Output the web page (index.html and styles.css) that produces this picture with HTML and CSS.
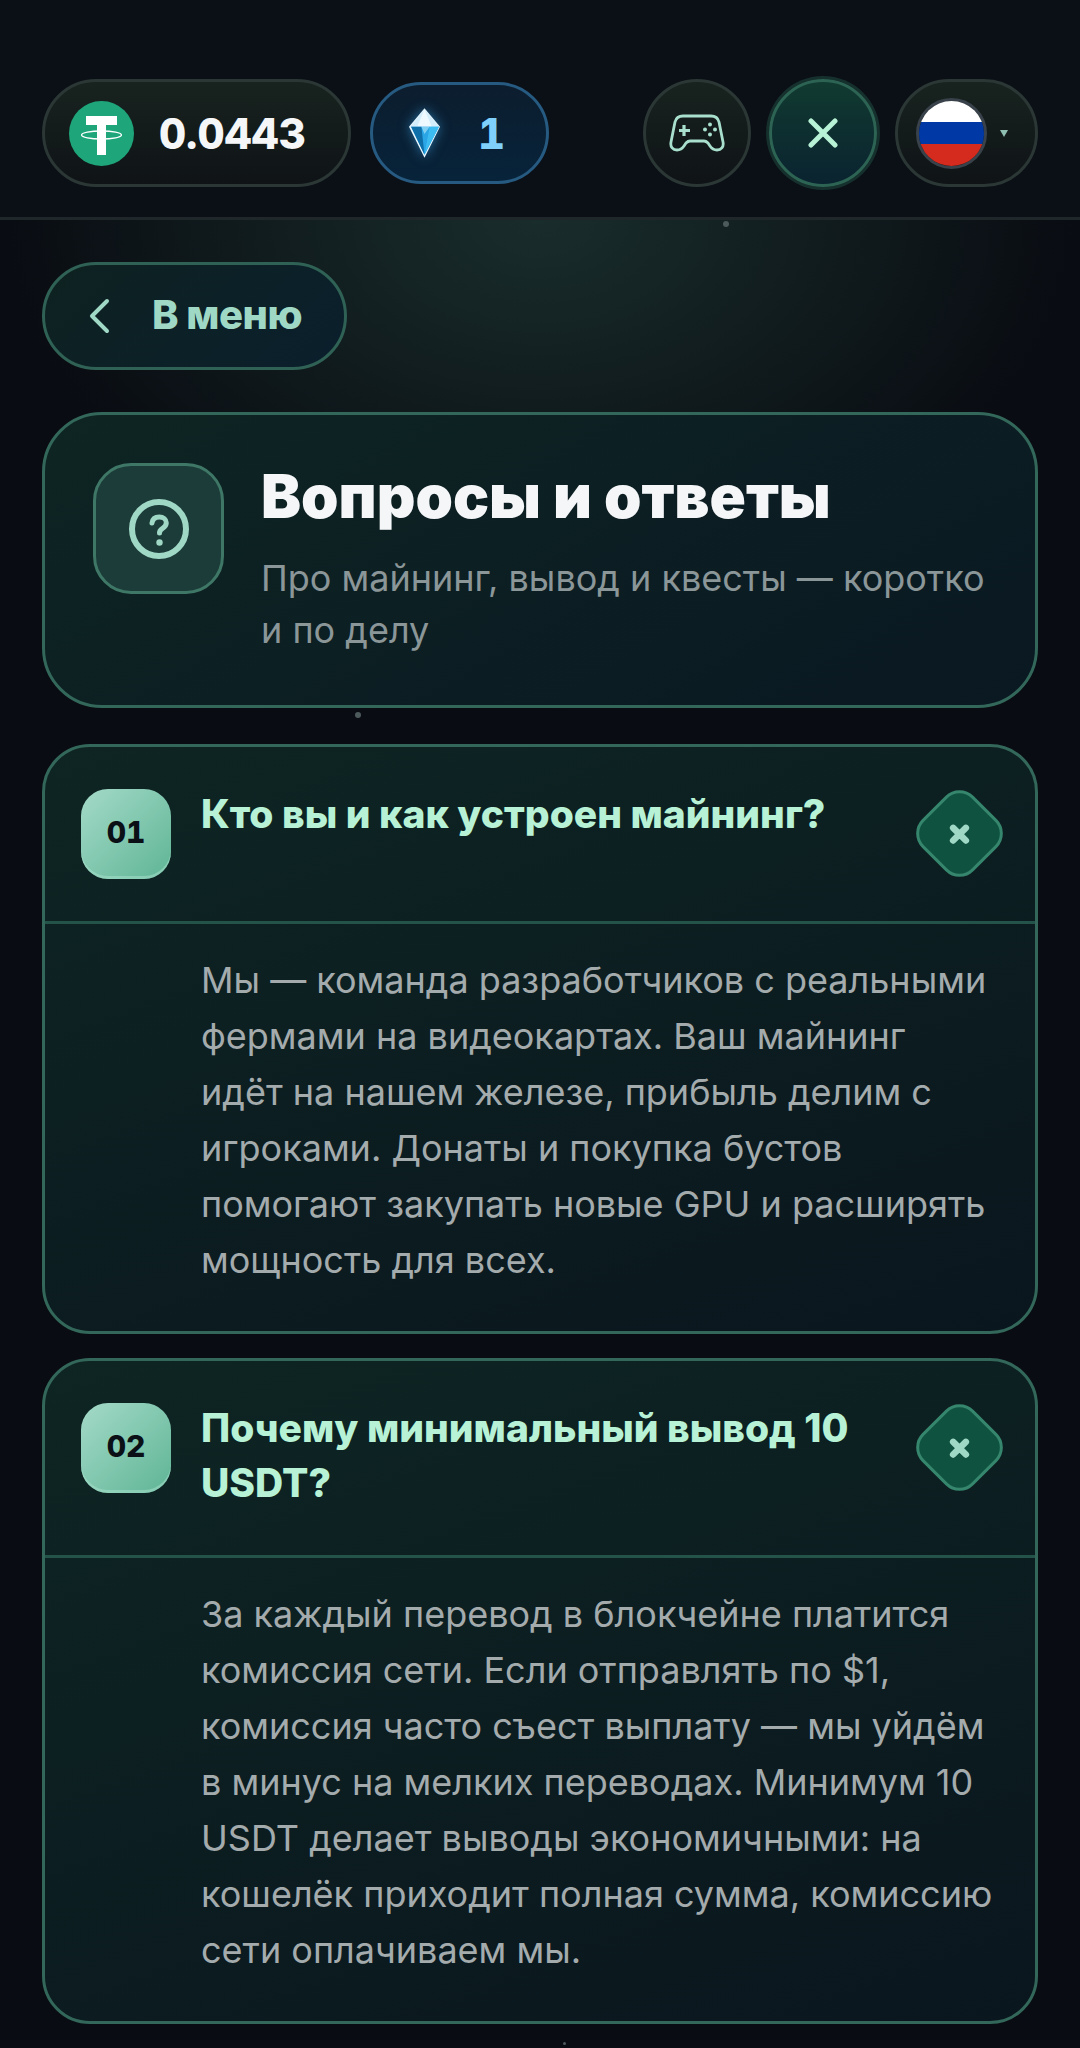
FILE: index.html
```html
<!DOCTYPE html>
<html lang="ru">
<head>
<meta charset="utf-8"/>
<title>Вопросы и ответы</title>
<link rel="stylesheet" href="styles.css">
</head>
<body>
<div class="page">
  <span class="dust dust-a"></span>
  <span class="dust dust-b"></span>
  <span class="dust dust-c"></span>

  <header class="topbar">
    <div class="pill balance">
      <svg class="usdt" viewBox="0 0 65 65">
        <circle cx="32.500" cy="32.500" r="32.500" fill="#1ea67a"/>
        <path d="M17 15h31v9H37v6h-9v-6H17z" fill="#fff"/>
        <path d="M28 38h9v16h-9z" fill="#fff"/>
        <ellipse cx="32.500" cy="34" rx="20" ry="4" fill="none" stroke="#fff" stroke-width="1.300"/>
        <path d="M28 30h9v9h-9z" fill="#fff"/>
      </svg>
      <span class="balance-value">0.0443</span>
    </div>
    <div class="pill gems">
      <svg class="gem" viewBox="0 0 30 48">
        <path d="M15 0 30 18 15 48 0 18z" fill="#e8f6fd"/>
        <path d="M15 1 29 18H1z" fill="#d3edfb"/>
        <path d="M15 1 22 18H8z" fill="#eef9ff"/>
        <path d="M2 18h27L15 45z" fill="#2aa5e6"/>
        <path d="M2 18h10l3 27z" fill="#0f6fa8"/>
        <path d="M29 18H20l-5 27z" fill="#3dbcf2"/>
        <path d="M12 18h8l-5 7z" fill="#7fcff3"/>
      </svg>
      <span class="gems-value">1</span>
    </div>
    <div class="topbar-right">
      <button class="round-btn">
        <svg width="56" height="38" viewBox="0 0 56 38" fill="none" stroke="#a8e0cd" stroke-width="2.800" stroke-linejoin="round">
          <path d="M14 2h28c4 0 7 2 8 6l4 20c1 5-2 8-6 8-3 0-5-1-7-4l-2-3c-1-1-2-2-4-2H21c-2 0-3 1-4 2l-2 3c-2 3-4 4-7 4-4 0-7-3-6-8L6 8c1-4 4-6 8-6z"/>
          <path d="M15 11v11M10 16.500h11" stroke-width="3.200"/>
          <circle cx="41" cy="10.500" r="2" fill="#a8e0cd" stroke="none"/>
          <circle cx="41" cy="20.500" r="2" fill="#a8e0cd" stroke="none"/>
          <circle cx="36" cy="15.500" r="2" fill="#a8e0cd" stroke="none"/>
          <circle cx="46" cy="15.500" r="2" fill="#a8e0cd" stroke="none"/>
        </svg>
      </button>
      <button class="round-btn close-btn">
        <svg width="30" height="30" viewBox="0 0 30 30" stroke="#b8f2d6" stroke-width="5" stroke-linecap="round">
          <path d="M3 3l24 24M27 3 3 27"/>
        </svg>
      </button>
      <div class="pill lang">
        <span class="flag"><i class="flag-w"></i><i class="flag-b"></i><i class="flag-r"></i></span>
        <span class="caret"></span>
      </div>
    </div>
  </header>

  <main class="content">
    <a class="back-btn">
      <svg width="22" height="36" viewBox="0 0 22 36" fill="none" stroke="#a0d8c6" stroke-width="4" stroke-linecap="round" stroke-linejoin="round">
        <path d="M19 3 4 18l15 15"/>
      </svg>
      <span class="back-label">В меню</span>
    </a>

    <section class="hero">
      <div class="hero-icon">
        <svg width="62" height="62" viewBox="0 0 62 62" fill="none" stroke="#a0d8c6" stroke-linecap="round">
          <circle cx="31" cy="31" r="27" stroke-width="6"/>
          <path d="M24 25c.5-4 3.500-6 7.300-6 4 0 7 2.300 7 5.800 0 2.800-1.700 4.200-3.700 5.500-1.900 1.200-3.100 2.400-3.100 4.700" stroke-width="5"/>
          <circle cx="31.500" cy="44.500" r="3.200" fill="#a0d8c6" stroke="none"/>
        </svg>
      </div>
      <div class="hero-text">
        <h1>Вопросы и ответы</h1>
        <p>Про майнинг, вывод и квесты — коротко и по делу</p>
      </div>
    </section>

    <article class="faq">
      <div class="faq-head">
        <span class="faq-num">01</span>
        <h2>Кто вы и как устроен майнинг?</h2>
        <span class="faq-toggle"><svg width="26" height="26" viewBox="0 0 26 26" stroke="#a0d8c6" stroke-width="6.500" stroke-linecap="round"><path d="M4 13h18M13 4v18"/></svg></span>
      </div>
      <p class="faq-body">Мы — команда разработчиков с реальными фермами на видеокартах. Ваш майнинг идёт на нашем железе, прибыль делим с игроками. Донаты и покупка бустов помогают закупать новые GPU и расширять мощность для всех.</p>
    </article>

    <article class="faq">
      <div class="faq-head">
        <span class="faq-num">02</span>
        <h2>Почему минимальный вывод 10 USDT?</h2>
        <span class="faq-toggle"><svg width="26" height="26" viewBox="0 0 26 26" stroke="#a0d8c6" stroke-width="6.500" stroke-linecap="round"><path d="M4 13h18M13 4v18"/></svg></span>
      </div>
      <p class="faq-body">За каждый перевод в блокчейне платится комиссия сети. Если отправлять по $1, комиссия часто съест выплату — мы уйдём в минус на мелких переводах. Минимум 10 USDT делает выводы экономичными: на кошелёк приходит полная сумма, комиссию сети оплачиваем мы.</p>
    </article>

    <article class="faq faq-next"></article>
  </main>
</div>
</body>
</html>
```

FILE: styles.css
```css
* {
  box-sizing: border-box;
}
html, body {
  margin: 0;
  background: #090c12;
}
body {
  font-family: Inter, 'Noto Sans', sans-serif;
}
.page {
  position: relative;
  width: 1080px;
  height: 2048px;
  overflow: hidden;
  background:
    radial-gradient(ellipse 540px 360px at 540px 220px, rgba(45, 85, 75, 0.45), rgba(45, 85, 75, 0) 100%),
    #090c12;
}
.dust {
  position: absolute;
  width: 6px;
  height: 6px;
  border-radius: 50%;
  background: #4d5a5c;
}
.dust-a { left: 723px; top: 221px; z-index: 2; }
.dust-b { left: 355px; top: 712px; }
.dust-c { left: 563px; top: 2042px; width: 3px; height: 3px; }

.topbar {
  display: flex;
  align-items: center;
  height: 220px;
  padding: 49px 42px 0;
  background: #0b0f16;
  border-bottom: 3px solid #20272b;
  gap: 19px;
}
.topbar-right {
  display: flex;
  align-items: center;
  gap: 18px;
  margin-left: auto;
}
.pill {
  display: flex;
  align-items: center;
  height: 108px;
  border: 3px solid #2b3735;
  border-radius: 54px;
  background: linear-gradient(180deg, #18231f, #0f1316);
}
.balance {
  width: 309px;
  padding-left: 24px;
  gap: 25px;
}
.usdt {
  width: 65px;
  height: 65px;
  flex: none;
}
.balance-value {
  font-size: 42px;
  font-weight: 800;
  color: #f5f6f8;
  font-variant-numeric: tabular-nums;
}
.gems {
  width: 179px;
  height: 102px;
  padding-left: 36px;
  gap: 38px;
  border-color: #265a80;
  background: linear-gradient(180deg, #0c1d2e, #07233a);
}
.gem {
  width: 31px;
  height: 50px;
  flex: none;
  filter: drop-shadow(0 0 6px rgba(60, 170, 240, 0.55));
}
.gems-value {
  font-size: 42px;
  font-weight: 800;
  color: #7fd0fb;
  font-variant-numeric: tabular-nums;
}
.round-btn {
  display: flex;
  align-items: center;
  justify-content: center;
  width: 108px;
  height: 108px;
  padding: 0;
  border: 3px solid #2b3735;
  border-radius: 50%;
  background: linear-gradient(180deg, #18231f, #0f1316);
}
.close-btn {
  border-color: #2c6353;
  background: linear-gradient(180deg, #113a30, #0a2330);
  box-shadow: 0 0 0 3px #15302d;
}
.lang {
  width: 143px;
  padding-left: 18px;
  gap: 13px;
}
.flag {
  display: flex;
  flex-direction: column;
  width: 71px;
  height: 71px;
  flex: none;
  border: 3px solid #39424a;
  border-radius: 50%;
  overflow: hidden;
}
.flag i {
  flex: 1;
}
.flag-w { background: #fff; }
.flag-b { background: #0039a6; }
.flag-r { background: #d52b1e; }
.caret {
  width: 0;
  height: 0;
  border-left: 4px solid transparent;
  border-right: 4px solid transparent;
  border-top: 7px solid #8fbfb0;
}

.content {
  display: flex;
  flex-direction: column;
  align-items: stretch;
  padding: 42px 42px 0;
}
.back-btn {
  display: flex;
  align-items: center;
  align-self: flex-start;
  width: 305px;
  height: 108px;
  padding-left: 43px;
  gap: 42px;
  border: 3px solid #2f6155;
  border-radius: 54px;
  background: linear-gradient(135deg, #0e2221, #0a1f2c);
  color: #a0d8c6;
  font-size: 40px;
  font-weight: 800;
  letter-spacing: -0.5px;
}
.back-label {
  margin-top: -4px;
}

.hero {
  display: flex;
  gap: 37px;
  height: 296px;
  margin-top: 42px;
  padding: 48px 48px 0;
  border: 3px solid #32675a;
  border-radius: 60px;
  background: linear-gradient(150deg, #0e2523, #0a1822);
}
.hero-icon {
  display: flex;
  align-items: center;
  justify-content: center;
  width: 131px;
  height: 131px;
  flex: none;
  border: 3px solid #3f7766;
  border-radius: 38px;
  background: #1b3c39;
}
.hero-text h1 {
  margin: -3px 0 0;
  font-size: 60px;
  line-height: 72px;
  font-weight: 900;
  color: #f5f6f8;
}
.hero-text p {
  margin: 20px 0 0;
  font-size: 36px;
  line-height: 52px;
  color: #8b9698;
}

.faq {
  margin-top: 24px;
  border: 3px solid #32675a;
  border-radius: 48px;
  background: linear-gradient(160deg, #0e2523, #0a161e);
}
.content > .hero + .faq {
  margin-top: 36px;
}
.faq-head {
  display: flex;
  align-items: flex-start;
  gap: 30px;
  padding: 42px 33px 42px 36px;
  border-bottom: 3px solid #24534a;
}
.faq-num {
  display: flex;
  align-items: center;
  justify-content: center;
  width: 90px;
  height: 90px;
  flex: none;
  padding-bottom: 4px;
  border-radius: 27px;
  background: linear-gradient(135deg, #a4dac8, #5fb596);
  box-shadow: inset 0 -3px 0 rgba(170, 225, 205, 0.5);
  color: #0b1016;
  font-size: 30px;
  font-weight: 800;
  font-variant-numeric: tabular-nums;
}
.faq-head h2 {
  flex: 1;
  margin: -3px 0 3px;
  font-size: 39px;
  line-height: 55px;
  font-weight: 800;
  color: #b8f2d6;
}
.faq-toggle {
  display: flex;
  align-items: center;
  justify-content: center;
  width: 73px;
  height: 73px;
  flex: none;
  margin: 8px 6px 0 0;
  border: 3px solid #35866c;
  border-radius: 20px;
  background: #0f5240;
  transform: rotate(45deg);
}
.faq-body {
  margin: 0;
  padding: 28px 42px 43px 156px;
  font-size: 36px;
  line-height: 56px;
  color: #a4abad;
}
.faq-next {
  height: 300px;
}
```
